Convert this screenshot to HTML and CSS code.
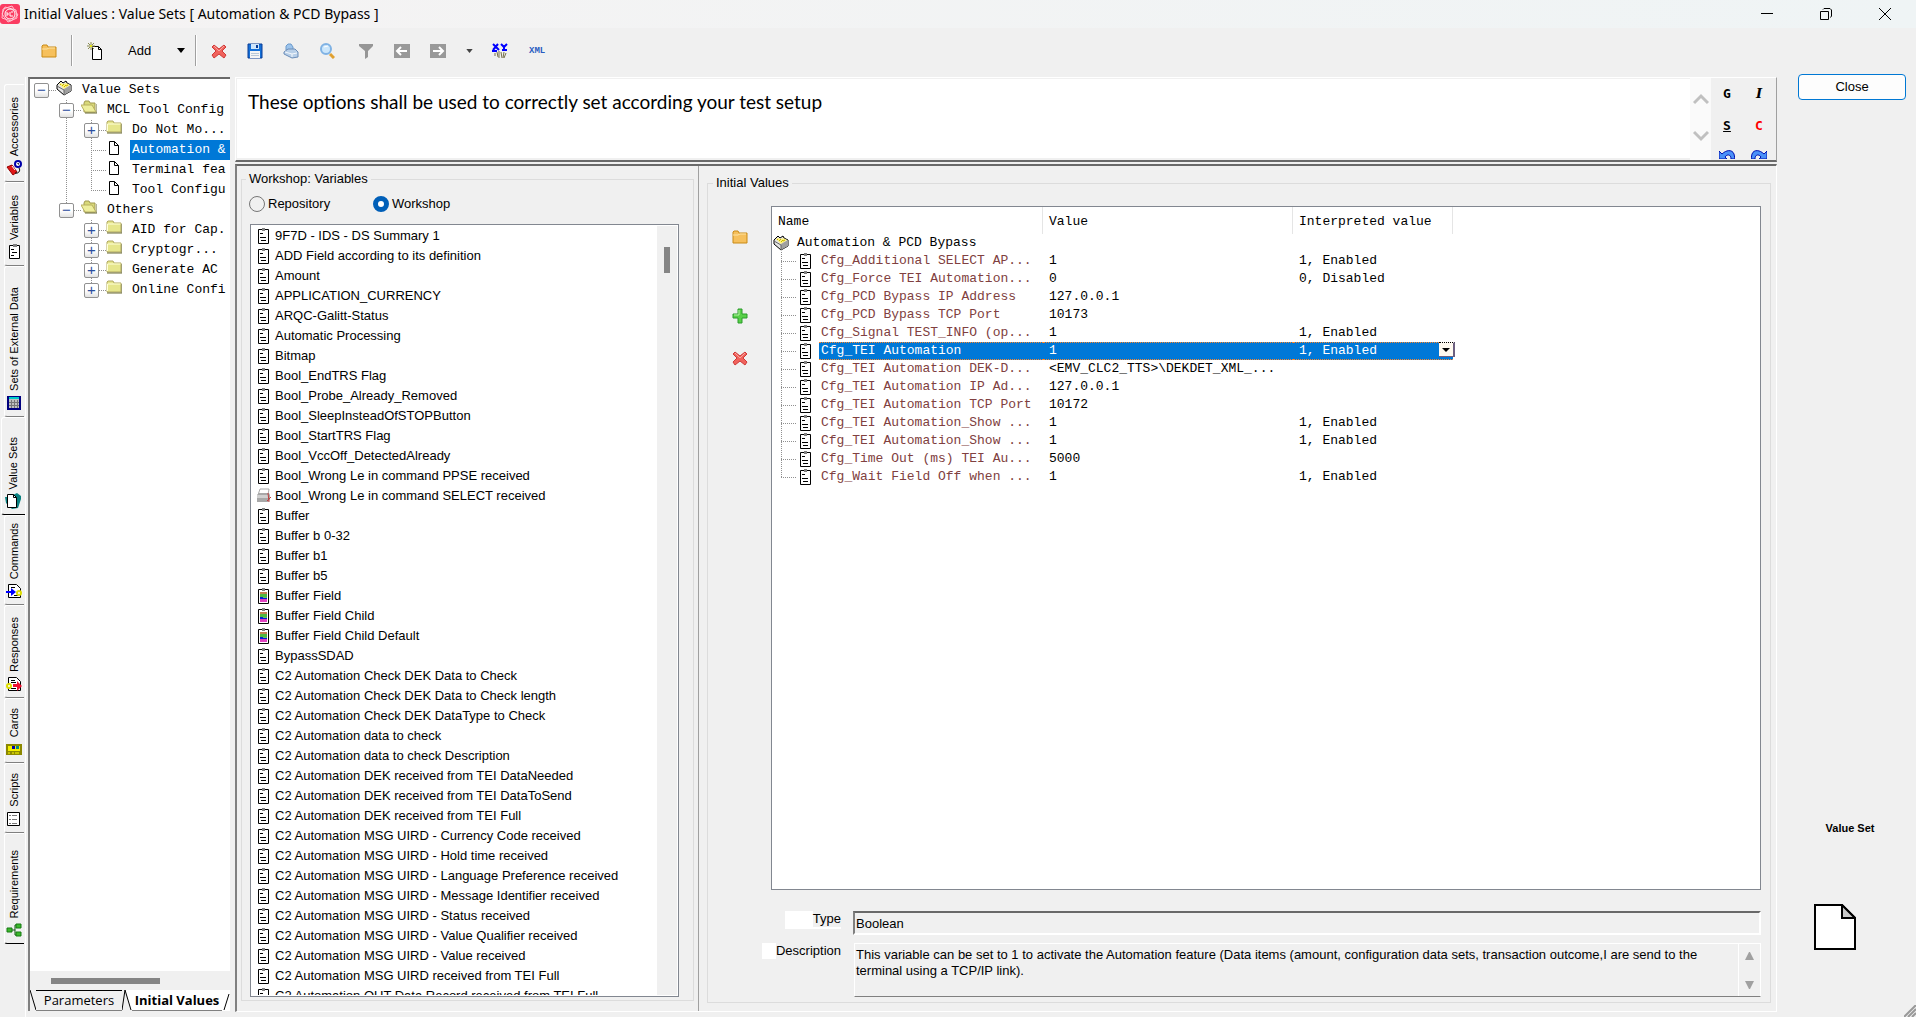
FILE: index.html
```html
<!DOCTYPE html>
<html lang="en">
<head>
    <meta charset="UTF-8">
    <meta name="viewport" content="width=device-width, initial-scale=1.0">
    <title>Initial Values : Value Sets [ Automation &amp; PCD Bypass ]</title>
    <link rel="stylesheet" href="styles.css">
</head>
<body>

<!-- shared icons -->
<svg class="defs" aria-hidden="true">
    <symbol id="var" viewBox="0 0 12 16">
        <path d="M.5 1.500h10v14H.5z" fill="#fff" stroke="#000"/>
        <path d="M4 0h3v3H4z" fill="#808080"/>
        <path d="M2 5.500h3M2 9.500h6M3 12.500h5" stroke="#000" fill="none"/>
    </symbol>
    <symbol id="field" viewBox="0 0 12 16">
        <path d="M.5 1.500h10v14H.5z" fill="#fff" stroke="#000"/>
        <path d="M4 0h3v3H4z" fill="#808080"/>
        <path d="M2 4h7v2H2z" fill="#c08050"/>
        <path d="M2 6h7v3H2z" fill="#50b840"/>
        <path d="M2 9h7v2H2z" fill="#0020d0"/>
        <path d="M5 9h4v1H5z" fill="#60c060"/>
        <path d="M2 11h7v3H2z" fill="#e040c0"/>
    </symbol>
    <symbol id="printer" viewBox="0 0 16 16">
        <path d="M4 1h9l-1 6H2z" fill="#fff" stroke="#aaa"/>
        <path d="M1 7l2-2h10l1 2v5l-2 2H1z" fill="#a8a8a8"/>
        <path d="M1 7h11v3H1z" fill="#d0d0d0"/>
        <path d="M12 5l1 9M11 13l4-4" stroke="#c04040" fill="none"/>
    </symbol>
    <symbol id="closed" viewBox="0 0 16 16">
        <path d="M1 3V2l1-1h5l1 2h7v9H1z" fill="#e6e68c" stroke="#b0a860"/>
        <path d="M1.500 11V4h13" fill="none" stroke="#ffffd8"/>
        <path d="M1 13h15V4" fill="none" stroke="#6b6a35"/>
    </symbol>
    <symbol id="opened" viewBox="0 0 16 16">
        <path d="M3 3l1-2h4l1 2h5v9H3z" fill="#d8d878" stroke="#a09850"/>
        <path d="M0 5h11l4 7H4z" fill="#eeee9c" stroke="#b8b060"/>
        <path d="M4 13h12V4" fill="none" stroke="#6b6a35"/>
    </symbol>
    <symbol id="box" viewBox="0 0 16 16">
        <path d="M1 5l4-4 2 2 3-2 1 2 4 2v6l-7 4-7-6z" fill="#e4e4e4" stroke="#000"/>
        <path d="M3 4l5 5 6-4-4-2-2 1-3-1z" fill="#fff27a"/>
        <path d="M4 5l1-1M6 6l2-2M8 7l2-2M10 6l2-1" stroke="#c8b400"/>
        <path d="M8 9v6l7-4V5z" fill="#a0a0a0"/>
        <path d="M1 6l7 4v5" fill="none" stroke="#666"/>
    </symbol>
    <symbol id="page" viewBox="0 0 12 16">
        <path d="M1.500 1.500h5l4 4v9h-9z" fill="#fff" stroke="#000"/>
        <path d="M6.500 1.500v4h4" fill="none" stroke="#000"/>
    </symbol>
    <symbol id="folder" viewBox="0 0 16 14">
        <path d="M1 13V2l1-1h4l1 2h8v10z" fill="#f6c05c" stroke="#c98a14"/>
        <path d="M1 5h5l2-1h6" fill="none" stroke="#fde3a4"/>
    </symbol>
    <symbol id="cross" viewBox="0 0 16 16">
        <path d="M3 2l5 4 5-4 2 2-4 4 4 4-2 3-5-4-5 4-2-3 4-4-4-4z" fill="#f0625c" stroke="#cf3a38"/>
        <path d="M3 3l5 5 5-5" fill="none" stroke="#fba59e"/>
    </symbol>
</svg>

<header class="titlebar">
    <svg class="logo" viewBox="0 0 20 20">
        <rect width="20" height="20" rx="3" fill="#fb3c62"/>
        <path d="M3 5l9-3 6 9-7 6-9-3zM5 3l11 3 1 8-9 4-6-8z" fill="none" stroke="#ffc3d0"/>
        <circle cx="10" cy="10" r="5" fill="#fb3c62" stroke="#fff"/>
        <path d="M7 8v4M7 10h2M10 8v4h3M13 8h-2" fill="none" stroke="#fff"/>
    </svg>
    <h1>Initial Values : Value Sets [ Automation &amp; PCD Bypass ]</h1>
    <div class="window-buttons">
        <button type="button" aria-label="Minimize"><svg viewBox="0 0 12 12"><path d="M0 5.500h12"/></svg></button>
        <button type="button" aria-label="Restore"><svg viewBox="0 0 12 12"><path d="M.5 3.500h8v8h-8zM3 1.500L4 .5h6l1.500 1.500v6l-1 1.500"/></svg></button>
        <button type="button" aria-label="Close window"><svg viewBox="0 0 12 12"><path d="M0 0l12 12M12 0L0 12"/></svg></button>
    </div>
</header>

<nav class="toolbar" aria-label="Toolbar">
    <button type="button" class="tool" aria-label="Open"><svg width="16" height="14"><use href="#folder"/></svg></button>
    <span class="sep"></span>
    <button type="button" class="tool" aria-label="New">
        <svg width="16" height="18" viewBox="0 0 16 18"><path d="M5.500 4.500h6l3 3v10h-9z" fill="#fff" stroke="#000"/><path d="M11.500 4.500v3h3" fill="none" stroke="#000"/><path d="M4 0v8M0 4h8M1 1l6 6M7 1L1 7" stroke="#8a8a50"/><circle cx="4" cy="4" r="1" fill="#ff0"/></svg>
    </button>
    <button type="button" class="add">Add <svg width="8" height="5" viewBox="0 0 8 5"><path d="M0 0h8L4 5z"/></svg></button>
    <span class="sep"></span>
    <button type="button" class="tool" aria-label="Delete"><svg width="16" height="16"><use href="#cross"/></svg></button>
    <button type="button" class="tool" aria-label="Save">
        <svg width="16" height="16" viewBox="0 0 16 16"><path d="M1 1h14v14H1z" fill="#1470d8" stroke="#0a3c96"/><path d="M4 1h8v5H4z" fill="#cfe6fb"/><path d="M9 2h2v3H9z" fill="#0a3c96"/><path d="M3 8h10v7H3z" fill="#f4f4f4"/><path d="M4 10.500h8M4 12.500h8" stroke="#b8c8d8"/></svg>
    </button>
    <button type="button" class="tool" aria-label="Print">
        <svg width="16" height="16" viewBox="0 0 16 16"><path d="M3 7V3l2-2h3l2 3v3z" fill="#9cc4ec" stroke="#6c9acb"/><path d="M1 9l4-3h7l3 3v5l-6 1-8-4z" fill="#b8cfe8" stroke="#6b8db8"/><path d="M2 9l7 2 5-1M9 11v3" fill="none" stroke="#f4f8fc"/></svg>
    </button>
    <button type="button" class="tool" aria-label="Find">
        <svg width="16" height="16" viewBox="0 0 16 16"><circle cx="7" cy="6" r="5" fill="#cbe6fb" stroke="#7fb2e4" stroke-width="2"/><path d="M5 4l4-1" stroke="#fff"/><path d="M11 11l4 4" stroke="#e0a030" stroke-width="3"/></svg>
    </button>
    <span class="space"></span>
    <button type="button" class="tool" aria-label="Filter">
        <svg width="16" height="16" viewBox="0 0 16 16"><path d="M1 1h14v2l-5 5v6l-3 2V8L1 3z" fill="#969696"/></svg>
    </button>
    <button type="button" class="tool" aria-label="Back">
        <svg width="16" height="14" viewBox="0 0 16 14"><path d="M0 0h16v14H0z" fill="#999"/><path d="M3 7h10M7 3L3 7l4 4" fill="none" stroke="#fff" stroke-width="2"/></svg>
    </button>
    <button type="button" class="tool" aria-label="Forward">
        <svg width="16" height="14" viewBox="0 0 16 14"><path d="M0 0h16v14H0z" fill="#999"/><path d="M3 7h10M9 3l4 4-4 4" fill="none" stroke="#fff" stroke-width="2"/></svg>
    </button>
    <button type="button" class="more" aria-label="More"><svg width="7" height="4" viewBox="0 0 8 5"><path d="M0 0h8L4 5z" fill="#444"/></svg></button>
    <button type="button" class="tool" aria-label="Check XML">
        <svg width="16" height="16" viewBox="0 0 16 16"><path d="M1 1l6 6M6 1L1 7M9 1l3 3 3-3M12 4v3M0 8h5M10 7h5" fill="none" stroke="#00f" stroke-width="2"/><path d="M3 10v3M5 9l1 5M7 8v7M9 9l1 6M12 9l-1 6M14 10l-2 5" stroke="#77704a" stroke-width="1"/></svg>
    </button>
    <button type="button" class="xml">XML</button>
</nav>

<div class="main">

    <nav class="side-tabs" aria-label="Objects">
        <button type="button" class="side-tab h98"><span>Accessories</span>
            <svg viewBox="0 0 16 16"><path d="M1 7l5-2 5 7-4 3z" fill="#e01818" stroke="#900"/><path d="M1 10l4 5M6 6l3 4" stroke="#fff"/><circle cx="12" cy="4" r="3" fill="#fff" stroke="#00a" stroke-width="2"/><path d="M12 3v1h1M13 8c2 3-1 6-4 5" fill="none" stroke="#000"/></svg></button>
        <button type="button" class="side-tab h84"><span>Variables</span>
            <svg viewBox="0 0 16 16"><path d="M3.500 1.500h10v13h-10z" fill="#fff" stroke="#000"/><path d="M7 0h4v3H7z" fill="#808080"/><path d="M5 5.500h3M6 8.500h5M5 11.500h3" stroke="#000"/></svg></button>
        <button type="button" class="side-tab h151"><span>Sets of External Data</span>
            <svg viewBox="0 0 16 16"><path d="M2 2h12v12H2z" fill="#c0c0c0" stroke="#000080" stroke-width="2"/><path d="M3 2h10v2H3z" fill="#0cc"/><path d="M3 7.500h10M3 10.500h10M5.500 5v8M8.500 5v8M11.500 5v8" stroke="#777"/></svg></button>
        <button type="button" class="side-tab h98 current"><span>Value Sets</span>
            <svg viewBox="0 0 16 16"><path d="M0 4h4l8-4 4 3v3l-3 9-6 1-6-6z" fill="#088080"/><path d="M2.500 1.500h6l3 3v10h-9z" fill="#fff" stroke="#000"/><path d="M8.500 1.500v3h3" fill="none" stroke="#000"/></svg></button>
        <button type="button" class="side-tab h90"><span>Commands</span>
            <svg viewBox="0 0 16 16"><path d="M2.500 1.500h8l4 4v9h-12z" fill="#fff" stroke="#000"/><path d="M5 4.500h4M8 12.500h4" stroke="#000"/><path d="M0 8h5V5l5 4-5 4v-3H0z" fill="#00f"/><circle cx="13" cy="10" r="2" fill="#fff" stroke="#dd0" stroke-width="2"/></svg></button>
        <button type="button" class="side-tab h93"><span>Responses</span>
            <svg viewBox="0 0 16 16"><path d="M2.500 1.500h8l4 4v9h-12z" fill="#fff" stroke="#000"/><path d="M5 4.500h4M5 6.500h5M5 12.500h5" stroke="#000"/><path d="M7 8h4V5l5 5-5 5v-4H7z" fill="#f01030"/><circle cx="3" cy="10" r="2" fill="#fff" stroke="#dd0" stroke-width="2"/></svg></button>
        <button type="button" class="side-tab h65"><span>Cards</span>
            <svg viewBox="0 0 16 16"><path d="M0 3h16v11H0z" fill="#8c8800"/><path d="M2 5h12v5H2z" fill="#f4f000"/><path d="M6 5h3v3H6z" fill="#00a"/><path d="M10 5h3v3h-3z" fill="#088"/><path d="M2 12h2M6 12h2M9 12h4" stroke="#ff0"/></svg></button>
        <button type="button" class="side-tab h70"><span>Scripts</span>
            <svg viewBox="0 0 16 16"><path d="M1.500 1.500h12v13h-12z" fill="#fff" stroke="#000"/><path d="M3 4.500h2M6 4.500h5M3 8.500h2M6 8.500h5M3 12.500h2M6 12.500h5" stroke="#777"/></svg></button>
        <button type="button" class="side-tab h111"><span>Requirements</span>
            <svg viewBox="0 0 16 16"><path d="M6 8h3M9 3v10M9 3h2M9 13h2" fill="none" stroke="#151"/><path d="M1 6h5v4H1zM10 2h5v4h-5zM10 10h5v4h-5z" fill="#3cb82c" stroke="#167a12"/></svg></button>
    </nav>

    <section class="tree-panel">
        <ul class="tree">
            <li>
                <div class="node"><button type="button" class="toggle" aria-label="Collapse">−</button><svg><use href="#box"/></svg><a href="#">Value Sets</a></div>
                <ul>
                    <li>
                        <div class="node"><button type="button" class="toggle" aria-label="Collapse">−</button><svg><use href="#opened"/></svg><a href="#">MCL Tool Config</a></div>
                        <ul>
                            <li><div class="node"><button type="button" class="toggle" aria-label="Expand">+</button><svg><use href="#closed"/></svg><a href="#">Do Not Mo...</a></div></li>
                            <li><div class="node leaf"><svg><use href="#page"/></svg><a href="#" class="active">Automation &amp;</a></div></li>
                            <li><div class="node leaf"><svg><use href="#page"/></svg><a href="#">Terminal fea</a></div></li>
                            <li><div class="node leaf"><svg><use href="#page"/></svg><a href="#">Tool Configu</a></div></li>
                        </ul>
                    </li>
                    <li>
                        <div class="node"><button type="button" class="toggle" aria-label="Collapse">−</button><svg><use href="#opened"/></svg><a href="#">Others</a></div>
                        <ul>
                            <li><div class="node"><button type="button" class="toggle" aria-label="Expand">+</button><svg><use href="#closed"/></svg><a href="#">AID for Cap.</a></div></li>
                            <li><div class="node"><button type="button" class="toggle" aria-label="Expand">+</button><svg><use href="#closed"/></svg><a href="#">Cryptogr...</a></div></li>
                            <li><div class="node"><button type="button" class="toggle" aria-label="Expand">+</button><svg><use href="#closed"/></svg><a href="#">Generate AC</a></div></li>
                            <li><div class="node"><button type="button" class="toggle" aria-label="Expand">+</button><svg><use href="#closed"/></svg><a href="#">Online Confi</a></div></li>
                        </ul>
                    </li>
                </ul>
            </li>
        </ul>
        <div class="hscroll"><div class="thumb"></div></div>
        <div class="sheet-tabs">
            <svg width="6" height="21" viewBox="0 0 6 21"><path d="M0 0l6 20" fill="none" stroke="#000"/></svg>
            <button type="button" class="sheet">Parameters</button>
            <svg class="between" width="10" height="21" viewBox="0 0 10 21"><path d="M10 21L3 0h7z" fill="#fff"/><path d="M3 0L0 20M3 0l6 20" fill="none" stroke="#000"/></svg>
            <button type="button" class="sheet on">Initial Values</button>
            <svg class="last" width="8" height="21" viewBox="0 0 8 21"><path d="M7 4L2 20" fill="none" stroke="#000"/></svg>
        </div>
    </section>

    <div class="work">
        <section class="comment">
            <textarea aria-label="Comment" readonly>These options shall be used to correctly set according your test setup</textarea>
            <div class="comment-scroll">
                <svg viewBox="0 0 16 12"><path d="M1 10l7-7 7 7"/></svg>
                <svg viewBox="0 0 16 12"><path d="M1 2l7 7 7-7"/></svg>
            </div>
            <div class="format">
                <button type="button">G</button>
                <button type="button" class="italic">I</button>
                <button type="button" class="under">S</button>
                <button type="button" class="color">C</button>
                <button type="button" aria-label="Undo"><svg width="16" height="16" viewBox="0 0 16 16"><path d="M0 1l3 3c4-4 10-5 12 0l1 5h-4c0-5-4-5-6-2l2 2H0z" fill="#4a90f8" stroke="#0010b0"/></svg></button>
                <button type="button" aria-label="Redo"><svg width="16" height="16" viewBox="0 0 16 16"><path d="M16 1l-3 3C9 0 3-1 1 4L0 9h4c0-5 4-5 6-2L8 9h8z" fill="#4a90f8" stroke="#0010b0"/></svg></button>
            </div>
        </section>

        <div class="panels">
            <div class="variables">
                <fieldset class="workshop">
                    <legend>Workshop: Variables</legend>
                    <div class="radios">
                        <input type="radio" id="repository" name="source">
                        <label for="repository">Repository</label>
                        <input type="radio" id="workshop" name="source" checked>
                        <label for="workshop">Workshop</label>
                    </div>
                    <div class="listbox">
                        <ul>
                            <li><svg><use href="#var"/></svg>9F7D - IDS - DS Summary 1</li>
                            <li><svg><use href="#var"/></svg>ADD Field according to its definition</li>
                            <li><svg><use href="#var"/></svg>Amount</li>
                            <li><svg><use href="#var"/></svg>APPLICATION_CURRENCY</li>
                            <li><svg><use href="#var"/></svg>ARQC-Galitt-Status</li>
                            <li><svg><use href="#var"/></svg>Automatic Processing</li>
                            <li><svg><use href="#var"/></svg>Bitmap</li>
                            <li><svg><use href="#var"/></svg>Bool_EndTRS Flag</li>
                            <li><svg><use href="#var"/></svg>Bool_Probe_Already_Removed</li>
                            <li><svg><use href="#var"/></svg>Bool_SleepInsteadOfSTOPButton</li>
                            <li><svg><use href="#var"/></svg>Bool_StartTRS Flag</li>
                            <li><svg><use href="#var"/></svg>Bool_VccOff_DetectedAlready</li>
                            <li><svg><use href="#var"/></svg>Bool_Wrong Le in command PPSE received</li>
                            <li><svg><use href="#printer"/></svg>Bool_Wrong Le in command SELECT received</li>
                            <li><svg><use href="#var"/></svg>Buffer</li>
                            <li><svg><use href="#var"/></svg>Buffer b 0-32</li>
                            <li><svg><use href="#var"/></svg>Buffer b1</li>
                            <li><svg><use href="#var"/></svg>Buffer b5</li>
                            <li><svg><use href="#field"/></svg>Buffer Field</li>
                            <li><svg><use href="#field"/></svg>Buffer Field Child</li>
                            <li><svg><use href="#field"/></svg>Buffer Field Child Default</li>
                            <li><svg><use href="#var"/></svg>BypassSDAD</li>
                            <li><svg><use href="#var"/></svg>C2 Automation Check DEK Data to Check</li>
                            <li><svg><use href="#var"/></svg>C2 Automation Check DEK Data to Check length</li>
                            <li><svg><use href="#var"/></svg>C2 Automation Check DEK DataType to Check</li>
                            <li><svg><use href="#var"/></svg>C2 Automation data to check</li>
                            <li><svg><use href="#var"/></svg>C2 Automation data to check Description</li>
                            <li><svg><use href="#var"/></svg>C2 Automation DEK received from TEI DataNeeded</li>
                            <li><svg><use href="#var"/></svg>C2 Automation DEK received from TEI DataToSend</li>
                            <li><svg><use href="#var"/></svg>C2 Automation DEK received from TEI Full</li>
                            <li><svg><use href="#var"/></svg>C2 Automation MSG UIRD - Currency Code received</li>
                            <li><svg><use href="#var"/></svg>C2 Automation MSG UIRD - Hold time received</li>
                            <li><svg><use href="#var"/></svg>C2 Automation MSG UIRD - Language Preference received</li>
                            <li><svg><use href="#var"/></svg>C2 Automation MSG UIRD - Message Identifier received</li>
                            <li><svg><use href="#var"/></svg>C2 Automation MSG UIRD - Status received</li>
                            <li><svg><use href="#var"/></svg>C2 Automation MSG UIRD - Value Qualifier received</li>
                            <li><svg><use href="#var"/></svg>C2 Automation MSG UIRD - Value received</li>
                            <li><svg><use href="#var"/></svg>C2 Automation MSG UIRD received from TEI Full</li>
                            <li><svg><use href="#var"/></svg>C2 Automation OUT Data Record received from TEI Full</li>
                        </ul>
                        <div class="vscroll"><div class="thumb"></div></div>
                    </div>
                </fieldset>
            </div>

            <fieldset class="values">
                <legend>Initial Values</legend>
                <div class="values-top">
                    <div class="actions">
                        <button type="button" aria-label="Open folder"><svg width="16" height="14"><use href="#folder"/></svg></button>
                        <button type="button" class="plus" aria-label="Add value"><svg width="16" height="16" viewBox="0 0 16 16"><path d="M6 1h4v5h5v4h-5v5H6v-5H1V6h5z" fill="#58d048" stroke="#2a9c2a"/><path d="M7 2v5H2" fill="none" stroke="#b4f0a4"/></svg></button>
                        <button type="button" class="del" aria-label="Remove value"><svg width="16" height="16"><use href="#cross"/></svg></button>
                    </div>
                    <div class="grid">
                        <table>
                            <thead>
                                <tr><th class="c-name">Name</th><th class="c-value">Value</th><th class="c-text">Interpreted value</th></tr>
                            </thead>
                            <tbody>
                                <tr class="root"><td colspan="3"><div><svg><use href="#box"/></svg>Automation &amp; PCD Bypass</div></td></tr>
                                <tr><td><div class="name"><svg><use href="#var"/></svg><span>Cfg_Additional SELECT AP...</span></div></td><td>1</td><td>1, Enabled</td></tr>
                                <tr><td><div class="name"><svg><use href="#var"/></svg><span>Cfg_Force TEI Automation...</span></div></td><td>0</td><td>0, Disabled</td></tr>
                                <tr><td><div class="name"><svg><use href="#var"/></svg><span>Cfg_PCD Bypass IP Address</span></div></td><td>127.0.0.1</td><td></td></tr>
                                <tr><td><div class="name"><svg><use href="#var"/></svg><span>Cfg_PCD Bypass TCP Port</span></div></td><td>10173</td><td></td></tr>
                                <tr><td><div class="name"><svg><use href="#var"/></svg><span>Cfg_Signal TEST_INFO (op...</span></div></td><td>1</td><td>1, Enabled</td></tr>
                                <tr class="selected"><td><div class="name"><svg><use href="#var"/></svg><span>Cfg_TEI Automation</span></div></td><td>1</td><td>1, Enabled<button type="button" class="drop" aria-label="Choose value"><svg width="8" height="4" viewBox="0 0 8 4"><path d="M0 0h8L4 4z"/></svg></button></td></tr>
                                <tr><td><div class="name"><svg><use href="#var"/></svg><span>Cfg_TEI Automation DEK-D...</span></div></td><td>&lt;EMV_CLC2_TTS&gt;\DEKDET_XML_...</td><td></td></tr>
                                <tr><td><div class="name"><svg><use href="#var"/></svg><span>Cfg_TEI Automation IP Ad...</span></div></td><td>127.0.0.1</td><td></td></tr>
                                <tr><td><div class="name"><svg><use href="#var"/></svg><span>Cfg_TEI Automation TCP Port</span></div></td><td>10172</td><td></td></tr>
                                <tr><td><div class="name"><svg><use href="#var"/></svg><span>Cfg_TEI Automation_Show ...</span></div></td><td>1</td><td>1, Enabled</td></tr>
                                <tr><td><div class="name"><svg><use href="#var"/></svg><span>Cfg_TEI Automation_Show ...</span></div></td><td>1</td><td>1, Enabled</td></tr>
                                <tr><td><div class="name"><svg><use href="#var"/></svg><span>Cfg_Time Out (ms) TEI Au...</span></div></td><td>5000</td><td></td></tr>
                                <tr><td><div class="name"><svg><use href="#var"/></svg><span>Cfg_Wait Field Off when ...</span></div></td><td>1</td><td>1, Enabled</td></tr>
                            </tbody>
                        </table>
                    </div>
                </div>
                <div class="details">
                    <label for="type" class="type-label"><span>Type</span></label>
                    <input type="text" id="type" value="Boolean" readonly>
                    <label for="description" class="desc-label"><span>Description</span></label>
                    <div class="desc-box">
                        <textarea id="description" readonly>This variable can be set to 1 to activate the Automation feature (Data items (amount, configuration data sets, transaction outcome,I are send to the terminal using a TCP/IP link).</textarea>
                        <div class="desc-scroll">
                            <svg viewBox="0 0 9 8"><path d="M0 8l4-8h1l4 8z"/></svg>
                            <svg viewBox="0 0 9 8"><path d="M0 0l4 8h1l4-8z"/></svg>
                        </div>
                    </div>
                </div>
            </fieldset>
        </div>
    </div>

    <aside class="right">
        <button type="button" class="close">Close</button>
        <div class="kind">
            <strong>Value Set</strong>
            <svg width="42" height="46" viewBox="0 0 42 46"><path d="M1 1h27l13 13v31H1z" fill="#fff" stroke="#000" stroke-width="2"/><path d="M28 1v13h13z" fill="#c8c8c8" stroke="#000" stroke-width="2"/></svg>
        </div>
        <svg class="grip" width="12" height="12" viewBox="0 0 12 12"><path d="M0 12L12 0M4 12l8-8M8 12l4-4" stroke="#999" stroke-width="2"/></svg>
    </aside>
</div>

</body>
</html>
```
FILE: styles.css
```css
* {
    box-sizing: border-box;
}
body {
    margin: 0;
    height: 100vh;
    display: flex;
    flex-direction: column;
    overflow: hidden;
    background: #f0f0f0;
    color: #000;
    font: 13px/16px "Liberation Sans", Arial, sans-serif;
}
button {
    padding: 0;
    border: none;
    background: none;
    color: inherit;
    font: inherit;
}
ul {
    list-style: none;
    margin: 0;
    padding: 0;
}
svg {
    display: block;
    flex: none;
}
.defs {
    width: 0;
    height: 0;
    position: absolute;
}

/* title bar */
.titlebar {
    display: flex;
    align-items: center;
    flex: none;
    height: 28px;
    padding-right: 2px;
    background: linear-gradient(90deg, #f5f3f3, #eff4f5);
}
.logo {
    width: 20px;
    height: 20px;
}
h1 {
    flex: 1;
    margin: 0 4px;
    font: 14px/20px "Noto Sans", sans-serif;
}
.window-buttons {
    display: flex;
}
.window-buttons button {
    width: 59px;
    height: 28px;
    display: flex;
    align-items: center;
    justify-content: center;
}
.window-buttons svg {
    width: 12px;
    height: 12px;
    fill: none;
    stroke: #000;
}

/* toolbar */
.toolbar {
    display: flex;
    align-items: center;
    flex: none;
    height: 49px;
    padding: 0 0 4px 31px;
}
.tool {
    width: 36px;
    height: 32px;
    display: flex;
    align-items: center;
    justify-content: center;
}
.sep {
    width: 2px;
    height: 31px;
    margin: 0 4px;
    border-left: 1px solid #a0a0a0;
    border-right: 1px solid #fff;
}
.space {
    width: 3px;
}
.add {
    display: flex;
    align-items: center;
    gap: 26px;
    margin: 0 6px 0 15px;
}
.more {
    width: 26px;
    height: 32px;
    display: flex;
    align-items: center;
    justify-content: center;
}
.xml {
    width: 38px;
    color: #2a5cc0;
    font: bold 9px/12px "Liberation Mono", monospace;
}

.main {
    flex: 1;
    min-height: 0;
    display: flex;
}

/* vertical tabs */
.side-tabs {
    width: 26px;
    flex: none;
    padding: 7px 1px 0 4px;
    border-right: 1px solid #fff;
}
.side-tab {
    width: 100%;
    display: flex;
    flex-direction: column;
    align-items: center;
    justify-content: flex-end;
    gap: 4px;
    padding: 0 1px 5px 0;
    border-top: 1px solid #fff;
    border-left: 1px solid #fff;
    border-bottom: 1px solid #808080;
    border-radius: 3px 0 0 3px;
    font-size: 11px;
    line-height: 14px;
}
.side-tab span {
    writing-mode: vertical-rl;
    transform: rotate(180deg);
}
.side-tab svg {
    width: 16px;
    height: 16px;
}
.side-tab.current {
    width: 24px;
    margin-left: -3px;
    border-bottom: 1px solid #000;
}
.side-tab:last-child {
    border-bottom-color: #000;
}
.h65 { height: 65px; }
.h70 { height: 70px; }
.h84 { height: 84px; }
.h90 { height: 90px; }
.h93 { height: 93px; }
.h98 { height: 98px; }
.h111 { height: 111px; }
.h151 { height: 151px; }

/* tree */
.tree-panel {
    width: 202px;
    flex: none;
    display: flex;
    flex-direction: column;
    margin: 0 5px 6px 2px;
    border-top: 2px solid #696969;
    border-left: 2px solid #808080;
    background: #fff;
}
.tree {
    flex: 1;
    min-height: 0;
    padding: 1px 0 0 4px;
    overflow: hidden;
    font: 13px/20px "Liberation Mono", monospace;
}
.tree ul {
    padding-left: 25px;
}
.tree ul li {
    background: repeating-linear-gradient(#909090 0 1px, transparent 1px 2px) 7px 0 / 1px 100% no-repeat;
}
.tree ul li:last-child {
    background-size: 1px 10px;
}
.node {
    height: 20px;
    display: flex;
    align-items: center;
    background: repeating-linear-gradient(90deg, #909090 0 1px, transparent 1px 2px) 7px 10px / 16px 1px no-repeat;
}
.node svg {
    width: 16px;
    height: 16px;
    margin: 0 8px 4px 7px;
}
.node.leaf svg {
    margin-left: 22px;
}
.node a {
    flex: none;
    padding: 0 2px;
    color: #000;
    text-decoration: none;
    white-space: nowrap;
}
.node a.active {
    flex: 1;
    background: #0078d7;
    color: #fff;
}
.toggle {
    width: 15px;
    height: 15px;
    border: 1px solid #919191;
    border-radius: 2px;
    background: linear-gradient(#fff 50%, #e2e2e2);
    color: #2b4f9e;
    font: 15px/12px "Liberation Sans", sans-serif;
}
.hscroll {
    height: 19px;
    padding: 7px 0 0 21px;
    background: #f0f0f0;
}
.hscroll .thumb {
    width: 109px;
    height: 6px;
    background: #858585;
}
.sheet-tabs {
    display: flex;
    height: 21px;
    background: #f0f0f0;
    font: 13px/20px "Open Sans", sans-serif;
}
.sheet {
    flex: none;
    width: 86px;
    border-top: 1px solid #000;
    border-bottom: 1px solid #808080;
    line-height: 19px;
}
.sheet.on {
    width: 90px;
    border-top-color: #fff;
    background: #fff;
    font-weight: bold;
}
.last {
    background: #fff;
}

/* comment editor */
.work {
    flex: 1;
    min-width: 0;
    display: flex;
    flex-direction: column;
    margin-bottom: 5px;
}
.comment {
    display: flex;
    flex: none;
    height: 85px;
    border: 1px solid #fff;
    border-right: 1px solid #a0a0a0;
    border-bottom: 2px solid #696969;
}
.comment textarea {
    flex: 1;
    min-width: 0;
    margin: 1px 0 2px 1px;
    padding: 11px;
    border: none;
    outline: none;
    resize: none;
    overflow: hidden;
    background: #fff;
    font: 19px/24px "Lato", sans-serif;
}
.comment-scroll {
    width: 21px;
    display: flex;
    flex-direction: column;
    align-items: center;
    gap: 25px;
    padding-top: 15px;
    background: #fafafa;
}
.comment-scroll svg {
    width: 16px;
    height: 12px;
    fill: none;
    stroke: #c0c0c0;
    stroke-width: 3;
}
.format {
    display: grid;
    grid-template-columns: 32px 32px;
    grid-auto-rows: 32px;
    justify-items: center;
    width: 65px;
    height: 81px;
    overflow: hidden;
    font: bold 13px/32px "DejaVu Sans Mono", monospace;
}
.format .italic {
    font-style: italic;
    font-family: "DejaVu Serif", serif;
}
.format .under {
    text-decoration: underline;
}
.format .color {
    color: #f00;
}

/* lower panels */
.panels {
    flex: 1;
    min-height: 0;
    display: flex;
    margin-top: 2px;
    border: 1px solid #fff;
    border-top: 2px solid #696969;
    border-left: 2px solid #808080;
}
fieldset {
    margin: 0;
    min-width: 0;
    min-height: 0;
    border: 1px solid #dcdcdc;
    display: flex;
    flex-direction: column;
}
legend {
    height: 16px;
    padding: 0 3px;
    margin-left: -4px;
}
.variables {
    width: 462px;
    flex: none;
    display: flex;
    padding: 5px 4px 10px 4px;
    border-right: 1px solid #a0a0a0;
}
.workshop {
    flex: 1;
    padding: 8px 14px 3px 8px;
}
.radios {
    display: flex;
    align-items: center;
    flex: none;
    height: 18px;
    margin-bottom: 11px;
}
.radios input {
    appearance: none;
    width: 16px;
    height: 16px;
    margin: 0 3px 0 -1px;
    border: 1px solid #767676;
    border-radius: 50%;
}
.radios input:checked {
    border: 5px solid #005fb8;
    background: #fff;
}
.radios label {
    width: 106px;
}
.listbox {
    flex: 1;
    min-height: 0;
    display: flex;
    padding: 1px;
    border: 1px solid #828790;
    background: #fff;
}
.listbox ul {
    flex: 1;
    overflow: hidden;
}
.listbox li {
    display: flex;
    align-items: center;
    gap: 3px;
    height: 20px;
    padding-left: 4px;
    white-space: nowrap;
}
.listbox li svg {
    width: 16px;
    height: 16px;
}
.vscroll {
    width: 20px;
    padding: 21px 7px 0;
    background: #f0f0f0;
}
.vscroll .thumb {
    height: 26px;
    background: #858585;
}

/* initial values */
.values {
    flex: 1;
    margin: 9px 5px 8px 8px;
    padding: 15px 9px 5px 0;
}
.values legend {
    margin-left: 5px;
}
.values-top {
    flex: 1;
    min-height: 0;
    display: flex;
}
.actions {
    width: 63px;
    display: flex;
    flex-direction: column;
    align-items: center;
    padding-top: 20px;
}
.actions button {
    width: 22px;
    height: 22px;
    display: flex;
    align-items: center;
    justify-content: center;
}
.actions .plus {
    margin: 57px 0 20px;
}
.grid {
    flex: 1;
    min-width: 0;
    border: 1px solid #828790;
    background: #fff;
    font: 13px/18px "Liberation Mono", monospace;
}
.grid table {
    width: 681px;
    table-layout: fixed;
    border-collapse: separate;
    border-spacing: 0;
}
.grid th {
    height: 27px;
    padding: 2px 6px 0;
    border-right: 1px solid #e5e5e5;
    font-weight: normal;
    text-align: left;
}
.c-name { width: 271px; }
.c-value { width: 250px; }
.c-text { width: 160px; }
.grid td {
    height: 18px;
    padding: 0 6px;
    white-space: nowrap;
}
.grid td:first-child {
    padding: 0;
}
.root div {
    display: flex;
    align-items: center;
    gap: 8px;
    padding-left: 1px;
}
.root svg {
    width: 16px;
    height: 16px;
}
.name {
    display: flex;
    align-items: center;
    height: 18px;
    padding-left: 26px;
    color: #804040;
    background:
        repeating-linear-gradient(#909090 0 1px, transparent 1px 2px) 9px 0 / 1px 100% no-repeat,
        repeating-linear-gradient(90deg, #909090 0 1px, transparent 1px 2px) 9px 9px / 16px 1px no-repeat;
}
tr:last-child .name {
    background-size: 1px 9px, 16px 1px;
}
.name svg {
    width: 16px;
    height: 16px;
}
.name span {
    flex: 1;
    margin-left: 5px;
    padding-left: 2px;
}
.selected td {
    position: relative;
    color: #fff;
}
.selected td + td,
.selected .name span {
    height: 18px;
    border: 1px dotted #ff8728;
    border-width: 1px 0;
    background: #0078d7;
    color: #fff;
    line-height: 16px;
}
.drop {
    position: absolute;
    top: -1px;
    right: -2px;
    width: 16px;
    height: 15px;
    display: flex;
    align-items: center;
    justify-content: center;
    background: #fffaf0;
    border: 1px dotted #000;
    border-width: 1px 0 0;
    border-right: 2px solid #6d6080;
    border-bottom: 1px solid #6d6080;
}

/* type and description */
.details {
    display: grid;
    grid-template-columns: 133px 1fr;
    column-gap: 12px;
    row-gap: 8px;
    flex: none;
    margin-top: 21px;
}
.details label {
    display: flex;
    justify-content: flex-end;
    align-self: start;
}
.details label span {
    background: #f0f0f0;
}
.type-label::before {
    content: "";
    width: 28px;
    background: #fff;
}
.type-label span {
    border-bottom: 2px solid #fff;
}
.desc-label::before {
    content: "";
    width: 14px;
    background: #fff;
}
.details input {
    min-width: 0;
    height: 24px;
    padding: 0 1px;
    border: 2px solid #fff;
    border-top-color: #696969;
    border-left-color: #808080;
    background: #f0f0f0;
    outline: none;
    font: inherit;
}
.desc-box {
    display: flex;
    height: 54px;
    margin-left: 1px;
    border: 1px solid #fff;
    border-bottom: 1px solid #808080;
}
.desc-box textarea {
    flex: 1;
    padding: 3px 1px;
    border: none;
    resize: none;
    outline: none;
    overflow: hidden;
    background: #f0f0f0;
    font: inherit;
}
.desc-scroll {
    width: 22px;
    display: flex;
    flex-direction: column;
    align-items: center;
    justify-content: space-between;
    padding: 8px 0 7px;
    border-left: 1px solid #fff;
}
.desc-scroll svg {
    width: 9px;
    height: 8px;
    fill: #a0a0a0;
}

/* right column */
.right {
    width: 139px;
    flex: none;
    display: flex;
    flex-direction: column;
    align-items: center;
    padding: 0 10px 0 21px;
    position: relative;
}
.close {
    width: 100%;
    height: 26px;
    margin-top: -3px;
    border: 1px solid #0078d4;
    border-radius: 4px;
    background: #fdfdfd;
}
.kind {
    margin-top: auto;
    margin-bottom: 67px;
    margin-right: 4px;
    display: flex;
    flex-direction: column;
    align-items: center;
    gap: 68px;
}
.kind strong {
    font-size: 11px;
}
.kind svg {
    margin-right: 30px;
}
.grip {
    position: absolute;
    right: 0;
    bottom: 0;
}
```
